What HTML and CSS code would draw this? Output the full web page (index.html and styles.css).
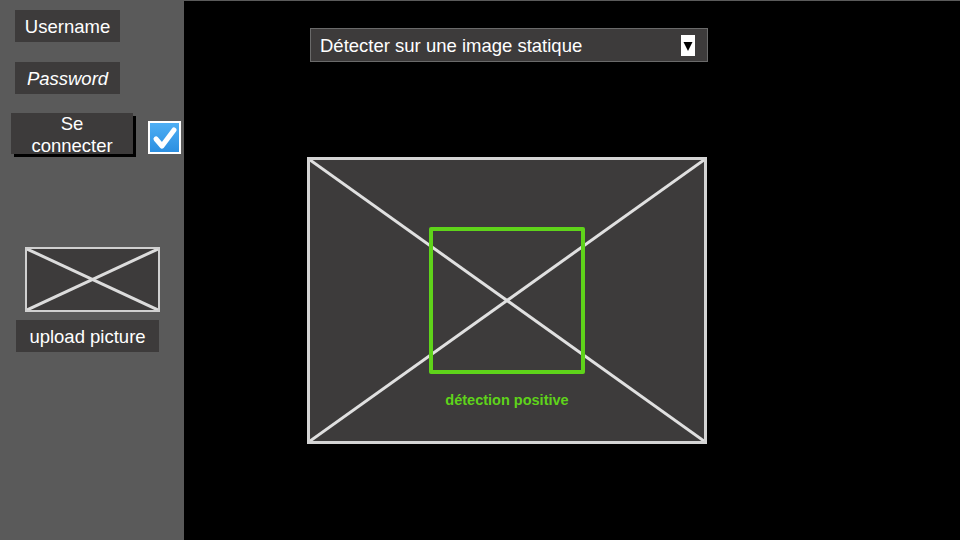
FILE: index.html
```html
<!DOCTYPE html>
<html lang="fr">
<head>
<meta charset="utf-8">
<title>Détection</title>
<link rel="stylesheet" href="styles.css">
</head>
<body>
<div class="app">
  <aside class="sidebar">
    <div class="field">Username</div>
    <div class="field field-italic">Password</div>
    <div class="login-row">
      <button class="login-btn">Se<br>connecter</button>
      <span class="checkbox">
        <svg viewBox="0 0 33 33" width="33" height="33">
          <defs>
            <linearGradient id="cbg" x1="0" y1="0" x2="0" y2="1">
              <stop offset="0" stop-color="#4fb0f5"/>
              <stop offset="1" stop-color="#2a8ee0"/>
            </linearGradient>
          </defs>
          <rect x="1" y="1" width="31" height="31" fill="url(#cbg)" stroke="#ffffff" stroke-width="2"/>
          <path d="M8 18 L14 25 L26 9" fill="none" stroke="#ffffff" stroke-width="5" stroke-linecap="round" stroke-linejoin="round"/>
        </svg>
      </span>
    </div>
    <div class="thumb">
      <svg class="cross" viewBox="0 0 100 100" preserveAspectRatio="none">
        <line x1="0" y1="0" x2="100" y2="100" vector-effect="non-scaling-stroke"/>
        <line x1="0" y1="100" x2="100" y2="0" vector-effect="non-scaling-stroke"/>
      </svg>
    </div>
    <div class="upload">upload picture</div>
  </aside>
  <main class="main">
    <div class="select">
      <span class="select-label">Détecter sur une image statique</span>
      <span class="select-arrow">
        <svg viewBox="0 0 14 21" width="14" height="21">
          <path d="M2.5 7 L11.5 7 L7 16 Z" fill="#000"/>
        </svg>
      </span>
    </div>
    <div class="picture">
      <svg class="cross big" viewBox="0 0 100 100" preserveAspectRatio="none">
        <line x1="0" y1="0" x2="100" y2="100" vector-effect="non-scaling-stroke"/>
        <line x1="0" y1="100" x2="100" y2="0" vector-effect="non-scaling-stroke"/>
      </svg>
      <div class="detect-box"></div>
      <div class="detect-label">détection positive</div>
    </div>
  </main>
</div>
</body>
</html>
```
FILE: styles.css
```css
* { box-sizing: border-box; }
html, body {
  margin: 0;
  padding: 0;
  width: 960px;
  height: 540px;
  overflow: hidden;
  background: #000;
  font-family: "Liberation Sans", Arial, sans-serif;
}
.app {
  display: flex;
  width: 960px;
  height: 540px;
}
.sidebar {
  width: 184px;
  flex: none;
  background: #5a5a5a;
  display: flex;
  flex-direction: column;
  align-items: flex-start;
  padding: 10px 0 0 15px;
}
.field {
  width: 105px;
  height: 32px;
  background: #3d3b3b;
  color: #fff;
  font-size: 18.5px;
  line-height: 34px;
  text-align: center;
  margin-bottom: 20px;
}
.field-italic { font-style: italic; margin-bottom: 19px; }
.login-row {
  display: flex;
  align-items: flex-start;
  margin-left: -4px;
}
.login-btn {
  width: 122px;
  height: 41px;
  background: #3d3b3b;
  color: #fff;
  border: none;
  padding: 0;
  font-family: "Liberation Sans", Arial, sans-serif;
  font-size: 18.5px;
  line-height: 22px;
  box-shadow: 3px 3px 0 #000;
}
.checkbox {
  display: block;
  width: 33px;
  height: 33px;
  margin: 8px 0 0 15px;
}
.checkbox svg { display: block; }
.thumb {
  position: relative;
  width: 135px;
  height: 65px;
  margin: 93px 0 0 10px;
  background: #3d3b3b;
  border: 2px solid #d0d0d0;
}
.cross {
  position: absolute;
  inset: 0;
  width: 100%;
  height: 100%;
}
.cross line {
  stroke: #dcdcdc;
  stroke-width: 3;
}
.upload {
  width: 143px;
  height: 32px;
  margin: 8px 0 0 1px;
  background: #3d3b3b;
  color: #fff;
  font-size: 18.5px;
  line-height: 34px;
  text-align: center;
}
.main {
  flex: 1;
  border-top: 1px solid #5a5a5a;
  display: flex;
  flex-direction: column;
  align-items: flex-start;
  padding: 27px 0 0 123px;
}
.select {
  width: 398px;
  height: 34px;
  background: #3d3b3b;
  border: 1px solid #6a6a6a;
  margin-left: 3px;
  display: flex;
  align-items: center;
  justify-content: space-between;
  padding: 1px 12px 0 9px;
  color: #fff;
  font-size: 18.5px;
}
.select-arrow {
  width: 14px;
  height: 21px;
  background: #fff;
  display: block;
}
.select-arrow svg { display: block; }
.picture {
  position: relative;
  width: 400px;
  height: 287px;
  margin-top: 95px;
  background: #3d3b3b;
  border: 3px solid #d4d4d4;
  display: flex;
  flex-direction: column;
  align-items: flex-start;
  padding: 67px 0 0 119px;
}
.cross.big line { stroke-width: 3; stroke: #e0e0e0; }
.detect-box {
  position: relative;
  width: 156px;
  height: 147px;
  border: 4px solid #5fd31a;
  border-radius: 2px;
}
.detect-label {
  position: relative;
  width: 156px;
  text-align: center;
  margin-top: 18px;
  color: #5fd31a;
  font-weight: bold;
  font-size: 14.5px;
}
```
